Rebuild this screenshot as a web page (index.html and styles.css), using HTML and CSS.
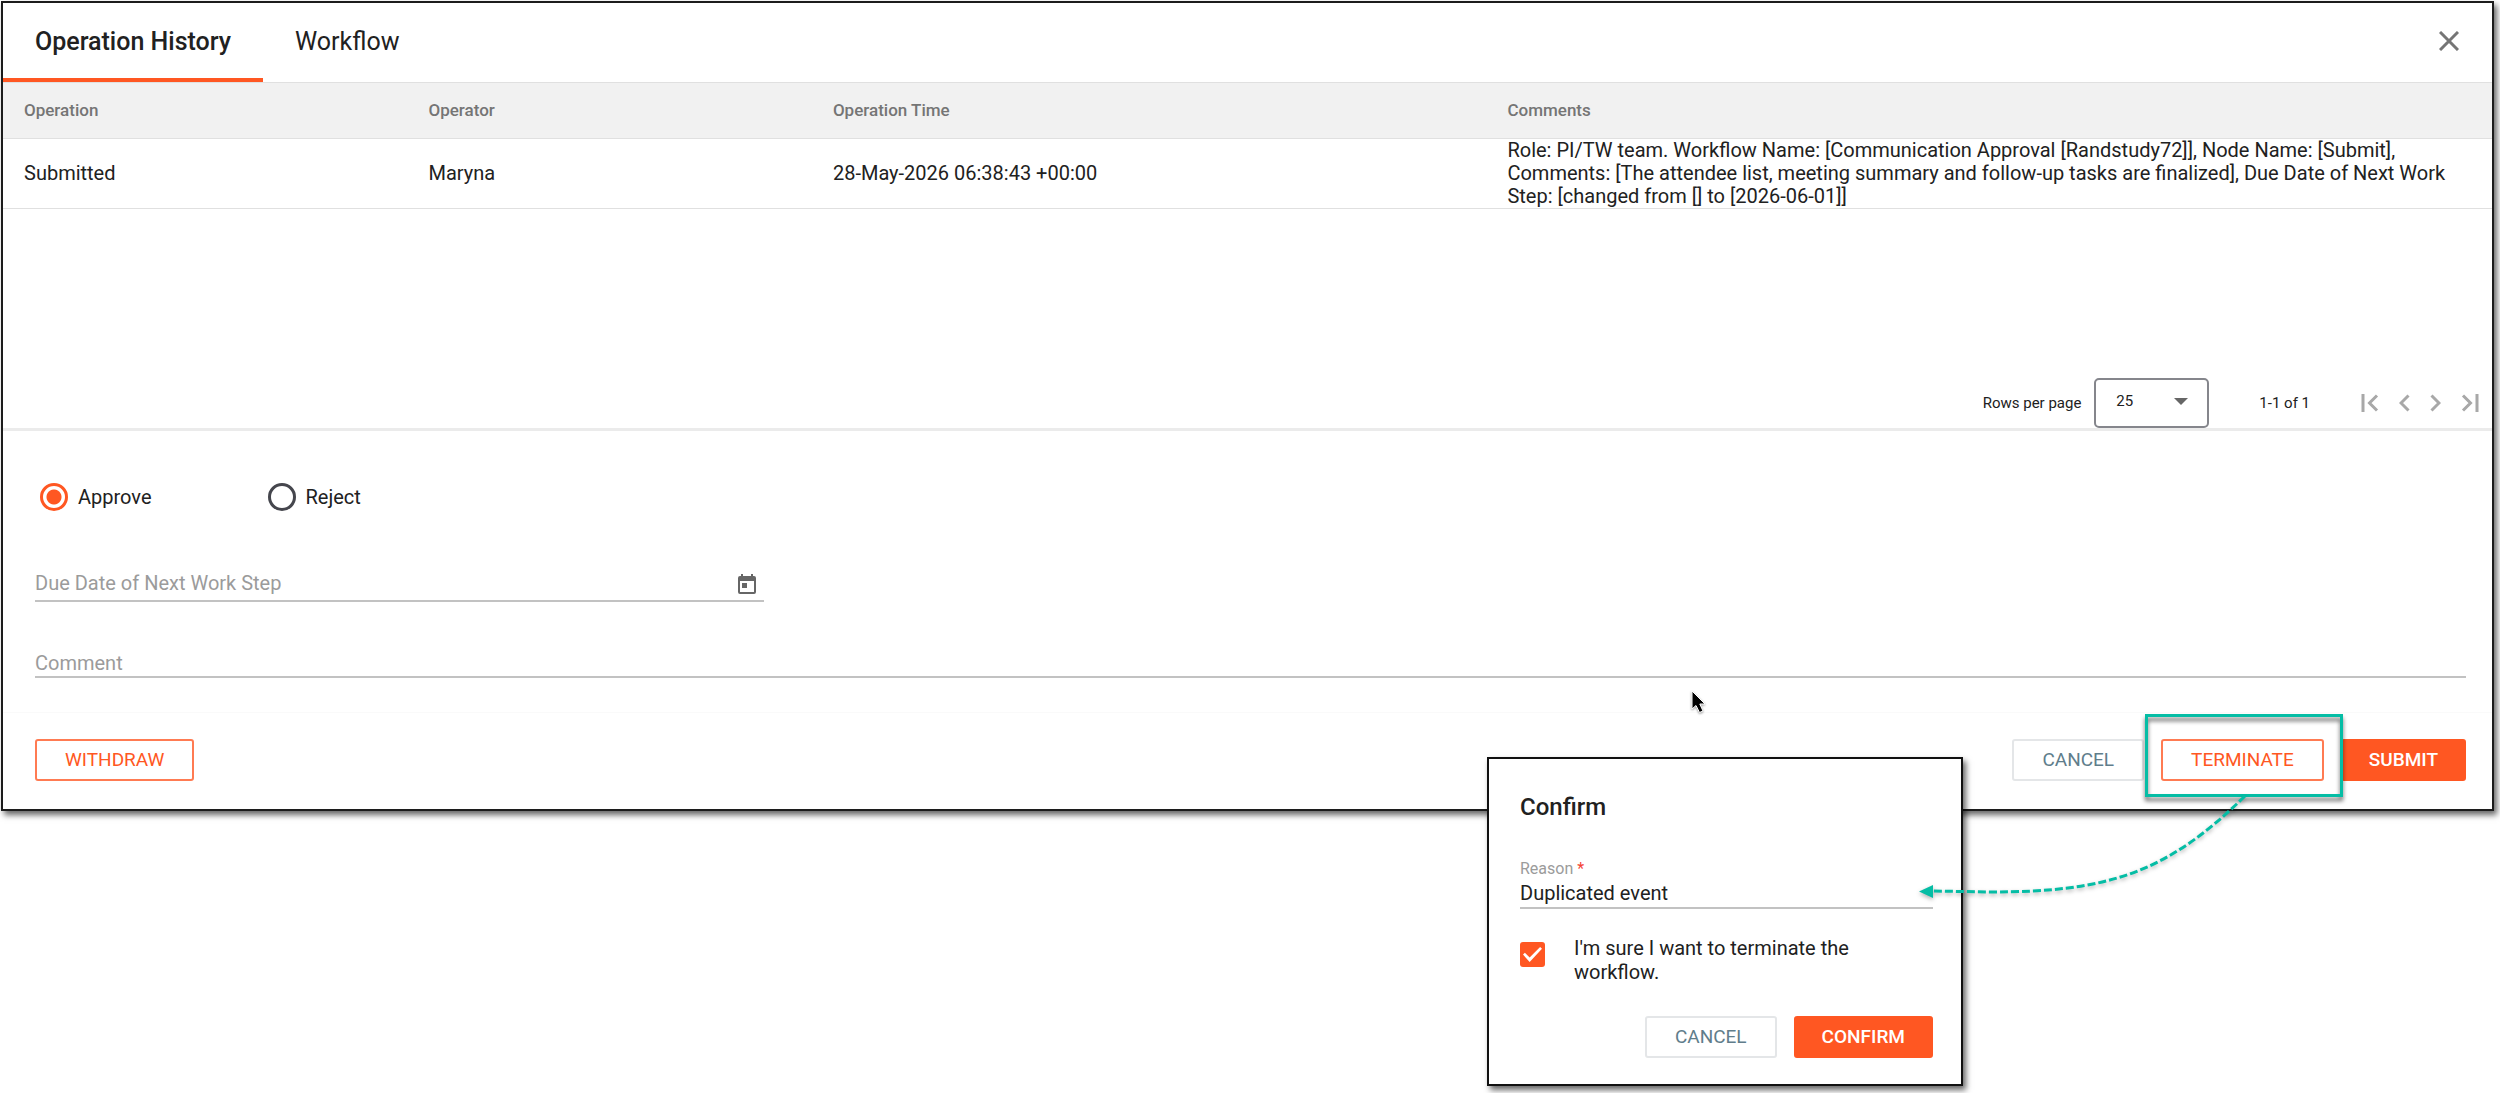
FILE: index.html
```html
<!DOCTYPE html>
<html lang="en">
<head>
<meta charset="utf-8">
<title>Operation History</title>
<link rel="stylesheet" href="styles.css">
</head>
<body>
<main class="stage">
  <section class="panel">
    <header class="tabs">
      <button class="tab tab-active" type="button">Operation History</button>
      <button class="tab" type="button">Workflow</button>
      <button class="icon-btn close" type="button" aria-label="Close">
        <svg width="20" height="20" viewBox="0 0 20 20"><path d="M1 1L19 19M19 1L1 19"/></svg>
      </button>
    </header>

    <div class="history">
      <table class="grid">
        <thead>
          <tr><th class="col-s">Operation</th><th class="col-s">Operator</th><th class="col-m">Operation Time</th><th>Comments</th></tr>
        </thead>
        <tbody>
          <tr>
            <td>Submitted</td>
            <td>Maryna</td>
            <td>28-May-2026 06:38:43 +00:00</td>
            <td>Role: PI/TW team. Workflow Name: [Communication Approval [Randstudy72]], Node Name: [Submit], Comments: [The attendee list, meeting summary and follow-up tasks are finalized], Due Date of Next Work Step: [changed from [] to [2026-06-01]]</td>
          </tr>
        </tbody>
      </table>
      <div class="pager">
        <label for="rows">Rows per page</label>
        <div class="select-box">
          <select id="rows"><option>25</option></select>
          <svg class="caret" width="14" height="7" viewBox="0 0 14 7"><path d="M0 0H14L7 7Z"/></svg>
        </div>
        <span class="range">1-1 of 1</span>
        <nav class="pages">
          <button class="icon-btn" type="button" aria-label="First page"><svg width="18" height="18" viewBox="0 0 18 18"><path d="M2 0V18M16 1.500L8.500 9L16 16.500"/></svg></button>
          <button class="icon-btn" type="button" aria-label="Previous page"><svg width="11" height="18" viewBox="0 0 11 18"><path d="M9.500 1.500L2 9L9.500 16.500"/></svg></button>
          <button class="icon-btn" type="button" aria-label="Next page"><svg width="11" height="18" viewBox="0 0 11 18"><path d="M1.500 1.500L9 9L1.500 16.500"/></svg></button>
          <button class="icon-btn" type="button" aria-label="Last page"><svg width="18" height="18" viewBox="0 0 18 18"><path d="M16 0V18M2 1.500L9.500 9L2 16.500"/></svg></button>
        </nav>
      </div>
    </div>

    <form class="decision">
      <div class="choices">
        <label class="choice"><input type="radio" name="decision" checked>Approve</label>
        <label class="choice"><input type="radio" name="decision">Reject</label>
      </div>
      <div class="field field-date">
        <input type="text" aria-label="Due Date of Next Work Step" placeholder="Due Date of Next Work Step">
        <svg class="calendar" width="18" height="20" viewBox="0 0 18 20"><path fill-rule="evenodd" d="M3 0H5V2H13V0H15V2H16Q18 2 18 4V18Q18 20 16 20H2Q0 20 0 18V4Q0 2 2 2H3ZM2 7V18H16V7ZM4 9H9V14H4Z"/></svg>
      </div>
      <div class="field field-comment">
        <input type="text" aria-label="Comment" placeholder="Comment">
      </div>
      <footer class="actions">
        <button class="btn btn-outline push" type="button">WITHDRAW</button>
        <button class="btn btn-plain" type="button">CANCEL</button>
        <div class="marked">
          <button class="btn btn-outline" type="button">TERMINATE</button>
          <span class="highlight"></span>
        </div>
        <button class="btn btn-solid" type="button">SUBMIT</button>
      </footer>
    </form>
  </section>

  <section class="dialog" role="dialog" aria-labelledby="dialog-title">
    <h2 id="dialog-title">Confirm</h2>
    <label class="reason-label" for="reason">Reason <span class="required">*</span></label>
    <input class="reason" id="reason" type="text" value="Duplicated event">
    <label class="agree">
      <input type="checkbox" checked>
      <span>I'm sure I want to terminate the workflow.</span>
    </label>
    <div class="dialog-actions">
      <button class="btn btn-plain" type="button">CANCEL</button>
      <button class="btn btn-solid" type="button">CONFIRM</button>
    </div>
  </section>

  <svg class="arrow" width="340" height="120" viewBox="0 0 340 120">
    <path class="arrow-line" d="M335 6C255 85 195 102 80 102L23 101"/>
    <path class="arrow-head" d="M9 101.500L23 95V108Z"/>
  </svg>
  <svg class="cursor" width="20" height="28" viewBox="0 0 20 28"><path d="M3 2V20L7 16.500L10.500 23.500L14 22L10.800 15H16Z"/></svg>
</main>
</body>
</html>
```
FILE: styles.css
```css
* { box-sizing: border-box; }

body {
  margin: 0;
  background: #fff;
  color: #212121;
  font-family: Roboto, "Liberation Sans", sans-serif;
  font-size: 20px;
  line-height: 23px;
}

button, input, select { font: inherit; color: inherit; }
button { cursor: pointer; }

.stage {
  position: relative;
  min-height: 100vh;
  padding: 1px 6px 0 1px;
}

.panel {
  border: 2px solid #1c1c1c;
  background: #fff;
  box-shadow: 3px 4px 6px rgba(0, 0, 0, 0.6);
}

/* Tabs */
.tabs {
  display: flex;
  align-items: stretch;
  height: 80px;
  border-bottom: 1px solid #e0e0e0;
}

.tab {
  padding: 2px 32px 0;
  border: 0;
  border-bottom: 4px solid transparent;
  background: none;
  font-size: 25px;
}

.tab-active {
  border-bottom-color: #ff5722;
  font-weight: 500;
}

.icon-btn {
  display: flex;
  padding: 0;
  border: 0;
  background: none;
}

.icon-btn path {
  fill: none;
  stroke: #a8a8a8;
  stroke-width: 3;
}

.close {
  align-items: center;
  margin-left: auto;
  padding: 0 33px 3px 0;
}

.close path {
  stroke: #757575;
  stroke-width: 3;
}

/* History table */
.history {
  display: flex;
  flex-direction: column;
  min-height: 348px;
  border-bottom: 3px solid #ebebeb;
}

.grid {
  width: 100%;
  border-collapse: collapse;
  table-layout: fixed;
}

.grid th, .grid td {
  padding: 0 32px 0 21px;
  border-bottom: 1px solid #e0e0e0;
  text-align: left;
}

.grid th {
  height: 55px;
  padding-top: 1px;
  background: #f1f1f1;
  color: #757575;
  font-size: 17px;
  font-weight: 500;
}

.col-s { width: 16.25%; }
.col-m { width: 27.1%; }

.pager {
  display: flex;
  align-items: center;
  justify-content: flex-end;
  margin-top: auto;
  padding-right: 13px;
  font-size: 15px;
}

.select-box {
  position: relative;
  margin: 0 50px 0 13px;
}

.select-box select {
  display: block;
  width: 115px;
  height: 50px;
  padding: 0 20px 4px;
  border: 2px solid #85868c;
  border-radius: 5px;
  background: none;
  appearance: none;
}

.caret {
  position: absolute;
  top: 20px;
  right: 21px;
  fill: #666;
}

.pages {
  display: flex;
  gap: 20px;
  margin-left: 51px;
}

/* Decision form */
.decision { padding: 46px 26px 28px 32px; }

.choices {
  display: flex;
  gap: 116px;
  padding-left: 5px;
}

.choice {
  display: flex;
  align-items: center;
  gap: 10px;
  height: 40px;
}

.choice input {
  width: 28px;
  height: 28px;
  margin: 0;
  border: 3px solid #45464d;
  border-radius: 50%;
  appearance: none;
}

.choice input:checked {
  border-color: #ff5722;
  background: radial-gradient(circle, #ff5722 7px, transparent 8px);
}

.field {
  display: flex;
  align-items: center;
  border-bottom: 2px solid #c2c2c2;
}

.field-date {
  width: 30%;
  height: 35px;
  margin-top: 50px;
  padding-right: 8px;
}

.field-comment {
  height: 28px;
  margin-top: 48px;
}

.field input {
  flex: 1;
  min-width: 0;
  padding: 0;
  border: 0;
  background: none;
}

.field input::placeholder { color: #9b9b9b; opacity: 1; }
.calendar { fill: #666; }

.actions {
  display: flex;
  gap: 17px;
  margin: 34px -26px 0 -32px;
  padding: 26px 26px 0 32px;
  border-top: 1px solid #fafafa;
}

.push { margin-right: auto; }

.btn {
  height: 42px;
  padding: 0 28px 2px;
  border: 2px solid transparent;
  border-radius: 3px;
  background: #fff;
  font-size: 19px;
}

.btn-plain { border-color: #e4e6e8; color: #607d8b; }
.btn-outline { border-color: #ff7b52; color: #ff5722; }

.btn-solid {
  padding: 0 26px 2px;
  border-color: #ff5722;
  background: #ff5722;
  color: #fff;
  font-weight: 500;
}

.marked { position: relative; }

.highlight {
  position: absolute;
  inset: -25px -19px -16px -16px;
  border: 3px solid #05bda5;
  filter: drop-shadow(0 4px 2px rgba(0, 0, 0, 0.6));
  pointer-events: none;
}

/* Confirmation dialog */
.dialog {
  position: absolute;
  top: 757px;
  right: 537px;
  width: 476px;
  padding: 33px 28px 26px 31px;
  border: 2px solid #111;
  background: #fff;
  box-shadow: 3px 4px 6px rgba(0, 0, 0, 0.6);
}

.dialog h2 {
  margin: 0 0 39px;
  font-size: 24px;
  font-weight: 500;
  line-height: 30px;
}

.reason-label {
  display: block;
  color: #9b9b9b;
  font-size: 16px;
  line-height: 16px;
}

.required { color: #f44336; }

.reason {
  display: block;
  width: 100%;
  height: 32px;
  padding: 1px 0 0;
  border: 0;
  border-bottom: 2px solid #c2c2c2;
  background: none;
}

.agree {
  display: flex;
  align-items: flex-start;
  gap: 29px;
  margin-top: 27px;
  line-height: 24px;
}

.agree input {
  flex: none;
  width: 25px;
  height: 25px;
  margin: 6px 0 0;
  border-radius: 3px;
  background: #ff5722;
  appearance: none;
  display: grid;
  place-items: center;
}

.agree input::before {
  content: "";
  width: 19px;
  height: 15px;
  background: #fff;
  clip-path: polygon(0 50%, 10% 39%, 35% 70%, 90% 0, 100% 11%, 35% 100%);
}

.dialog-actions {
  display: flex;
  justify-content: flex-end;
  gap: 17px;
  margin-top: 32px;
}

/* Annotations */
.arrow {
  position: absolute;
  top: 790px;
  right: 250px;
  filter: drop-shadow(0 2px 2px rgba(0, 0, 0, 0.3));
  pointer-events: none;
}

.arrow-line {
  fill: none;
  stroke: #05bda5;
  stroke-width: 3;
  stroke-dasharray: 8 3;
}

.arrow-head { fill: #05bda5; }

.cursor {
  position: absolute;
  top: 689px;
  right: 791px;
  filter: drop-shadow(0 1px 1px rgba(0, 0, 0, 0.4));
  stroke: #fff;
  stroke-width: 1;
}
```
